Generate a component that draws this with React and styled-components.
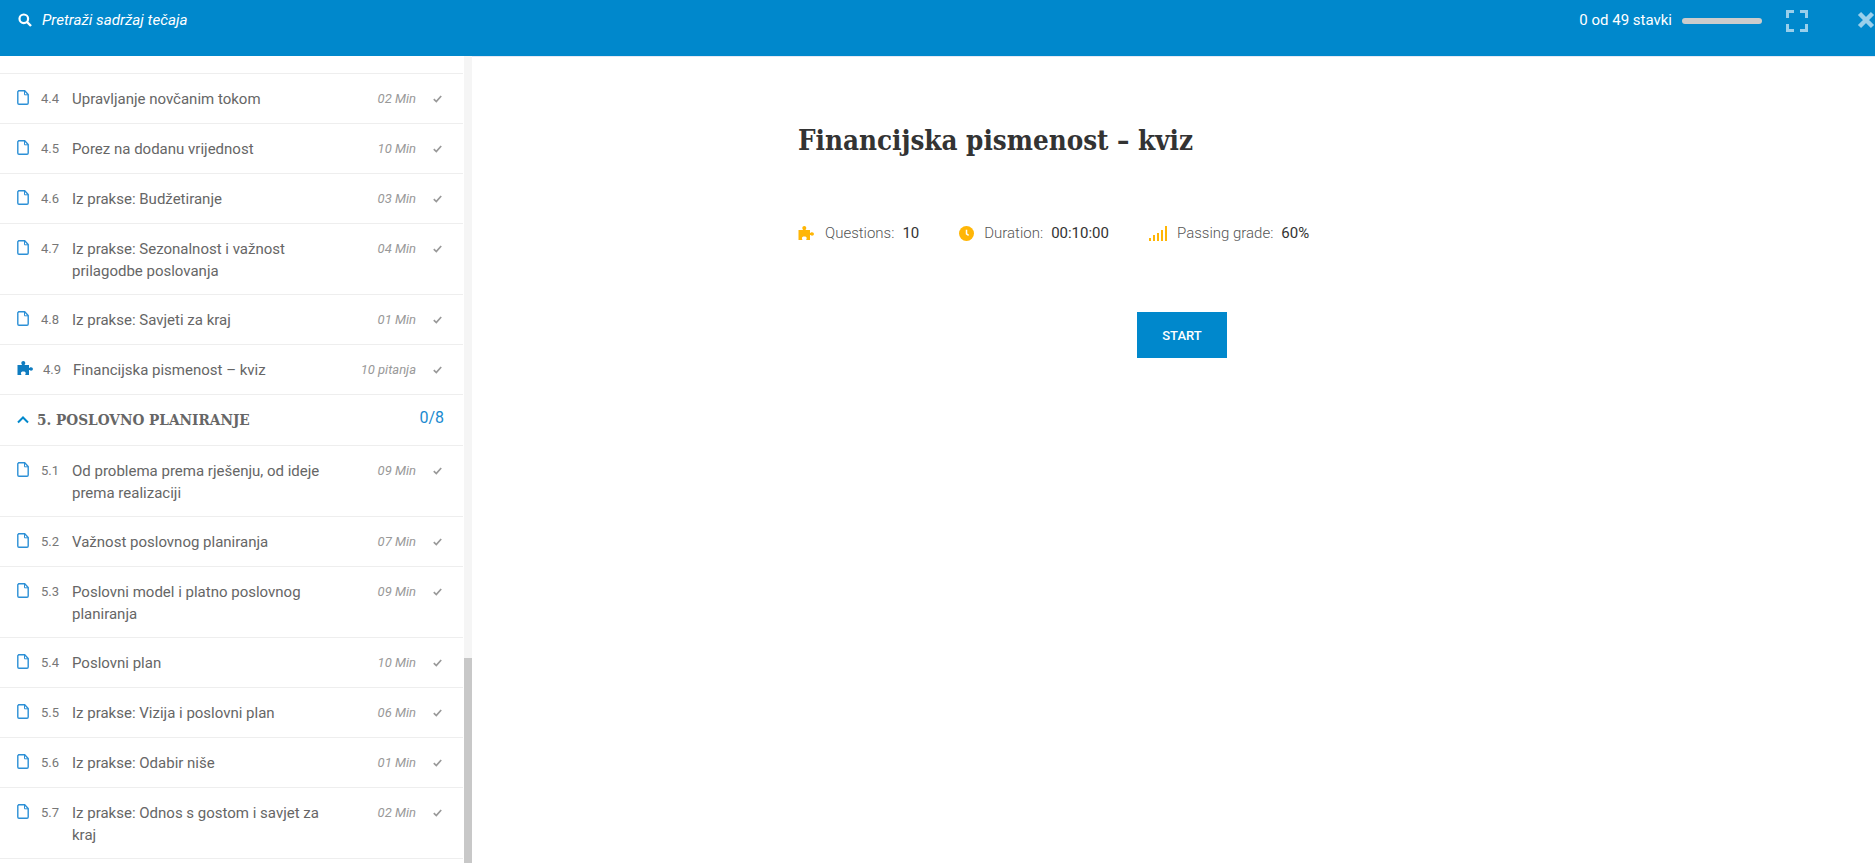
import React from 'react';
import styled, { createGlobalStyle } from 'styled-components';

const ROW_LINE = '#eeeeee';

const GlobalStyle = createGlobalStyle`
  html, body { margin: 0; padding: 0; height: 100%; overflow: hidden; background: #fff; }
  body { font-family: Roboto, "Liberation Sans", sans-serif; }
  * { box-sizing: border-box; }
`;

const Page = styled.div`
  display: flex;
  flex-direction: column;
  width: 1875px;
  height: 863px;
  overflow: hidden;
`;

const Header = styled.header`
  flex: 0 0 56px;
  background: #0088cc;
  display: flex;
  justify-content: space-between;
  padding: 0 0 0 18px;
  color: #fff;
  overflow: hidden;
`;

const Search = styled.div`
  display: flex;
  align-items: center;
  gap: 10px;
  height: 40px;
  font-size: 15.2px;
  font-style: italic;
`;

const HeaderRight = styled.div`
  display: flex;
  align-items: center;
  height: 40px;
  font-size: 15px;
`;

const ProgressTrack = styled.div`
  width: 80px;
  height: 6px;
  margin-left: 10px;
  margin-top: 2px;
  border-radius: 3px;
  background: #cccccc;
`;

const FullscreenButton = styled.div`
  display: flex;
  margin-left: 24px;
  margin-top: 2px;
`;

const CloseButton = styled.div`
  display: flex;
  margin-left: 48px;
  margin-right: -1px;
`;

const Main = styled.div`
  flex: 1;
  display: flex;
  min-height: 0;
`;

const Sidebar = styled.aside`
  flex: 0 0 472px;
  position: relative;
  overflow: hidden;
  background: #f5f5f5;
`;

const SidebarList = styled.div`
  width: 464px;
  padding-right: 1px;
  background: #fff;
  height: 100%;
  overflow: hidden;
`;

const ScrollThumb = styled.div`
  position: absolute;
  right: 0;
  bottom: 0;
  width: 8px;
  height: 205px;
  background: #c8c8c8;
`;

const CutRow = styled.div`
  height: 18px;
  border-bottom: 1px solid ${ROW_LINE};
`;

const Row = styled.div`
  display: flex;
  align-items: flex-start;
  min-height: 50px;
  padding: 14px 0 12px 17px;
  border-bottom: 1px solid ${ROW_LINE};
`;

const RowIcon = styled.span`
  flex: 0 0 ${p => (p.$quiz ? 18 : 12)}px;
  display: flex;
  margin-top: 2px;
`;

const RowNumber = styled.span`
  flex: 0 0 ${p => (p.$quiz ? 25 : 31)}px;
  padding-left: ${p => (p.$quiz ? 8 : 12)}px;
  font-size: 13px;
  line-height: 22px;
  color: #777777;
  white-space: nowrap;
`;

const RowTitle = styled.span`
  width: 270px;
  margin-left: 12px;
  font-size: 15px;
  line-height: 22px;
  color: #666666;
`;

const RowMeta = styled.span`
  margin-left: auto;
  width: 62px;
  text-align: right;
  font-size: 13px;
  line-height: 22px;
  font-style: italic;
  color: #999999;
  white-space: nowrap;
`;

const RowCheck = styled.span`
  flex: 0 0 9px;
  margin: 7px 21px 0 17px;
  display: flex;
`;

const SectionRow = styled.div`
  height: 51px;
  display: flex;
  align-items: center;
  padding: 0 19px 0 17px;
  border-bottom: 1px solid ${ROW_LINE};
`;

const SectionTitle = styled.span`
  margin-left: 8px;
  font-family: "DejaVu Serif Condensed", "DejaVu Serif", serif;
  font-stretch: condensed;
  font-weight: 700;
  font-size: 15.2px;
  color: #666666;
  white-space: nowrap;
`;

const SectionCount = styled.span`
  margin-left: auto;
  margin-top: -6px;
  font-size: 16px;
  color: #1a8ad0;
`;

const Content = styled.main`
  flex: 1;
  border-top: 1px solid #e3e9f5;
  padding: 60px 0 0 326px;
`;

const Title = styled.h1`
  margin: 0;
  font-family: "DejaVu Serif Condensed", "DejaVu Serif", serif;
  font-stretch: condensed;
  font-weight: 700;
  font-size: 27.5px;
  line-height: 46px;
  color: #333333;
`;

const Meta = styled.div`
  display: flex;
  margin-top: 57px;
  height: 26px;
  align-items: center;
`;

const MetaItem = styled.div`
  display: flex;
  align-items: center;
  margin-right: 40px;
  font-size: 15px;
  font-weight: 300;
  color: #555555;
`;

const MetaIcon = styled.span`
  display: flex;
  margin-right: ${p => p.$gap}px;
`;

const MetaValue = styled.span`
  margin-left: 8px;
  font-weight: 400;
  color: #333333;
`;

const StartWrap = styled.div`
  margin-top: 66px;
  padding-left: 339px;
`;

const StartButton = styled.button`
  width: 90px;
  height: 46px;
  border: 0;
  background: #0088cc;
  color: #fff;
  font-family: Roboto, sans-serif;
  font-size: 13px;
  font-weight: 500;
`;

const SearchIcon = () => (
  <svg width="14" height="14" viewBox="0 0 14 14">
    <circle cx="5.8" cy="5.8" r="4.3" fill="none" stroke="#fff" strokeWidth="2.2" />
    <path d="M9 9l4 4" stroke="#fff" strokeWidth="2.4" />
  </svg>
);

const DocIcon = () => (
  <svg width="12" height="15" viewBox="0 0 12 15">
    <path d="M1.700.8h6l3.500 3.700V13a1.200 1.200 0 0 1-1.200 1.200H2A1.200 1.200 0 0 1 .8 13V1.700z" fill="none" stroke="#2b8fd6" strokeWidth="1.400" />
    <path d="M7.500 1v3.800h3.600" fill="none" stroke="#2b8fd6" strokeWidth="1" />
  </svg>
);

const PuzzleIcon = ({ color }) => (
  <svg width="18" height="14" viewBox="0 0 17 14">
    <path d="M0 4h4.400c.3-.6-.6-1-.6-2C3.800.8 4.700 0 5.800 0s2 .8 2 2c0 1-.9 1.400-.6 2h4.300v2.900c.6.300 1-.6 2-.6 1.200 0 1.900.7 1.900 1.700s-.7 1.700-1.900 1.700c-1 0-1.400-.9-2-.6V14H7.800c-.3-.6.400-1 .400-2 0-.9-.8-1.500-2.400-1.500S3.400 11.100 3.400 12c0 1 .7 1.400.4 2H0z" fill={color} />
  </svg>
);

const CheckIcon = () => (
  <svg width="9" height="8" viewBox="0 0 9 8">
    <path d="M.8 4.200l2.500 2.400L8.200 1" fill="none" stroke="#999" strokeWidth="1.700" />
  </svg>
);

const ChevronIcon = () => (
  <svg width="12" height="8" viewBox="0 0 12 8">
    <path d="M1 6.500l5-5 5 5" fill="none" stroke="#0088cc" strokeWidth="2" />
  </svg>
);

const ClockIcon = () => (
  <svg width="15" height="15" viewBox="0 0 14 14">
    <circle cx="7" cy="7" r="7" fill="#ffb606" />
    <path d="M7 3.500v3.800l2 1.400" fill="none" stroke="#fff" strokeWidth="1.400" />
  </svg>
);

const BarsIcon = () => (
  <svg width="18" height="15" viewBox="0 0 18 15">
    {[[0, 3], [4, 6], [8, 8], [12, 11], [16, 15]].map(([x, h]) => (
      <rect key={x} x={x} y={15 - h} width="2" height={h} fill="#ffb606" />
    ))}
  </svg>
);

const FullscreenIcon = () => (
  <svg width="22" height="22" viewBox="0 0 22 22">
    <path d="M1.500 8V1.500H8M14 1.500h6.500V8M20.500 14v6.500H14M8 20.500H1.500V14" fill="none" stroke="#fff" strokeOpacity=".6" strokeWidth="3" />
  </svg>
);

const CloseIcon = () => (
  <svg width="20" height="20" viewBox="0 0 20 20">
    <path d="M3.500 3.500l13 13M16.500 3.500l-13 13" fill="none" stroke="#fff" strokeOpacity=".6" strokeWidth="4.500" />
  </svg>
);

const section4 = [
  ['4.4', 'Upravljanje novčanim tokom', '02 Min'],
  ['4.5', 'Porez na dodanu vrijednost', '10 Min'],
  ['4.6', 'Iz prakse: Budžetiranje', '03 Min'],
  ['4.7', 'Iz prakse: Sezonalnost i važnost prilagodbe poslovanja', '04 Min'],
  ['4.8', 'Iz prakse: Savjeti za kraj', '01 Min'],
];

const section5 = [
  ['5.1', 'Od problema prema rješenju, od ideje prema realizaciji', '09 Min'],
  ['5.2', 'Važnost poslovnog planiranja', '07 Min'],
  ['5.3', 'Poslovni model i platno poslovnog planiranja', '09 Min'],
  ['5.4', 'Poslovni plan', '10 Min'],
  ['5.5', 'Iz prakse: Vizija i poslovni plan', '06 Min'],
  ['5.6', 'Iz prakse: Odabir niše', '01 Min'],
  ['5.7', 'Iz prakse: Odnos s gostom i savjet za kraj', '02 Min'],
];

const Lesson = ({ num, title, meta, quiz }) => (
  <Row>
    <RowIcon $quiz={quiz}>{quiz ? <PuzzleIcon color="#0f7cc0" /> : <DocIcon />}</RowIcon>
    <RowNumber $quiz={quiz}>{num}</RowNumber>
    <RowTitle>{title}</RowTitle>
    <RowMeta>{meta}</RowMeta>
    <RowCheck><CheckIcon /></RowCheck>
  </Row>
);

const App = () => {
  return (
    <Page>
      <GlobalStyle />
      <Header>
        <Search>
          <SearchIcon />
          <span>Pretraži sadržaj tečaja</span>
        </Search>
        <HeaderRight>
          <span>0 od 49 stavki</span>
          <ProgressTrack />
          <FullscreenButton><FullscreenIcon /></FullscreenButton>
          <CloseButton><CloseIcon /></CloseButton>
        </HeaderRight>
      </Header>
      <Main>
        <Sidebar>
          <SidebarList>
            <CutRow />
            {section4.map(([num, title, meta]) => (
              <Lesson key={num} num={num} title={title} meta={meta} />
            ))}
            <Lesson num="4.9" title="Financijska pismenost – kviz" meta="10 pitanja" quiz />
            <SectionRow>
              <ChevronIcon />
              <SectionTitle>5. POSLOVNO PLANIRANJE</SectionTitle>
              <SectionCount>0/8</SectionCount>
            </SectionRow>
            {section5.map(([num, title, meta]) => (
              <Lesson key={num} num={num} title={title} meta={meta} />
            ))}
          </SidebarList>
          <ScrollThumb />
        </Sidebar>
        <Content>
          <Title>Financijska pismenost – kviz</Title>
          <Meta>
            <MetaItem>
              <MetaIcon $gap={9}><PuzzleIcon color="#ffb606" /></MetaIcon>
              Questions: <MetaValue>10</MetaValue>
            </MetaItem>
            <MetaItem>
              <MetaIcon $gap={10}><ClockIcon /></MetaIcon>
              Duration: <MetaValue>00:10:00</MetaValue>
            </MetaItem>
            <MetaItem>
              <MetaIcon $gap={10}><BarsIcon /></MetaIcon>
              Passing grade: <MetaValue>60%</MetaValue>
            </MetaItem>
          </Meta>
          <StartWrap>
            <StartButton>START</StartButton>
          </StartWrap>
        </Content>
      </Main>
    </Page>
  );
};

export default App;
